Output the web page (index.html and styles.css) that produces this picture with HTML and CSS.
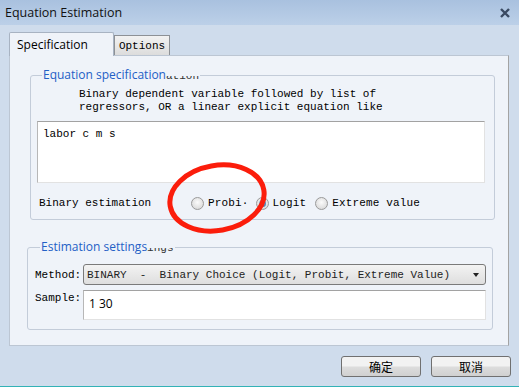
FILE: index.html
```html
<!DOCTYPE html>
<html lang="en">
<head>
  <meta charset="UTF-8">
  <title>Equation Estimation</title>
  <link rel="stylesheet" href="styles.css">
</head>
<body>

<div class="window">
  <div class="titlebar">
    <span class="title">Equation Estimation</span>
    <svg class="close" width="12" height="10" viewBox="0 0 12 10">
      <path d="M2 1 L10 9 M10 1 L2 9" stroke="#3a4a62" stroke-width="2.4" fill="none"/>
    </svg>
  </div>

  <div class="content">
    <div class="tabs">
      <div class="tab active">Specification</div>
      <div class="tab">Options</div>
    </div>

    <div class="panel">
      <fieldset class="group group-spec">
        <legend>Equation specification<span class="ghost">ation</span></legend>
        <div class="desc">
          Binary dependent variable followed by list of<br>
          regressors, OR a linear explicit equation like
        </div>
        <div class="textbox spec-box">labor c m s</div>
        <div class="binary-row">
          <span class="binary-label">Binary estimation</span>
          <span class="radio"></span><span class="radio-text probit">Probi·</span>
          <span class="radio checked"></span><span class="radio-text">Logit</span>
          <span class="radio"></span><span class="radio-text">Extreme value</span>
        </div>
      </fieldset>

      <fieldset class="group group-settings">
        <legend>Estimation settings<span class="ghost">ings</span></legend>
        <div class="field-row">
          <span class="field-label">Method:</span>
          <div class="combo">
            <span>BINARY  -  Binary Choice (Logit, Probit, Extreme Value)</span>
            <span class="arrow"></span>
          </div>
        </div>
        <div class="field-row sample-row">
          <span class="field-label">Sample:</span>
          <div class="textbox sample-box">1 30</div>
        </div>
      </fieldset>
    </div>

    <div class="buttons">
      <div class="button">确定</div>
      <div class="button">取消</div>
    </div>
  </div>

  <svg class="mark" width="110" height="80" viewBox="0 0 110 80">
    <ellipse cx="55" cy="38" rx="47.5" ry="32.5" transform="rotate(-10 55 38)"
             fill="none" stroke="#fb1d0b" stroke-width="5"/>
  </svg>
</div>

</body>
</html>
```

FILE: styles.css
```css
body {
  margin: 0;
  font-family: "Liberation Mono", monospace;
  font-size: 11px;
  color: #000;
}

.window {
  position: relative;
  width: 519px;
  height: 386px;
  background-color: #cfdcec;
  border-bottom: 1px solid #33b2b6;
  overflow: hidden;
}

.titlebar {
  height: 25px;
  display: flex;
  align-items: center;
  justify-content: space-between;
  padding: 0 8px 0 5px;
  background: linear-gradient(#a9c1df, #bcd0e8);
  font-family: "Open Sans", sans-serif;
  font-size: 12.5px;
  color: #111;
}

.content {
  padding: 7px 9px 0 9px;
}

/* tabs */

.tabs {
  display: flex;
  align-items: flex-end;
  height: 24px;
  margin-bottom: -1px;
}

.tab {
  height: 19px;
  width: 54px;
  border: 1px solid #8d9196;
  border-bottom: none;
  background: linear-gradient(#f2f2f2, #dcdcdc);
  display: flex;
  align-items: center;
  justify-content: center;
  margin-bottom: 1px;
}

.tab.active {
  width: 96px;
  height: 23px;
  justify-content: flex-start;
  padding-left: 7px;
  margin-bottom: 0;
  border-color: #a8b3c2;
  border-radius: 2px 2px 0 0;
  background: #eff3f9;
  font-family: "Open Sans", sans-serif;
  font-size: 12px;
  position: relative;
  z-index: 1;
}

.panel {
  width: 498px;
  height: 277px;
  background-color: #eff3f9;
  border: 1px solid #bcc6d3;
  border-right-color: #a3a3a3;
  padding-top: 12px;
}

/* group boxes */

.group {
  border: 1px solid #c3ccd9;
  border-radius: 3px;
  padding: 0;
  min-width: 0;
}

.group legend {
  font-family: "Open Sans", sans-serif;
  font-size: 12px;
  line-height: 14px;
  color: #2360c6;
  padding: 0 1px;
  margin-left: 5px;
}

.ghost {
  font-family: "Liberation Mono", monospace;
  font-size: 11px;
  color: #333;
  clip-path: inset(50% 0 0 0);
}

.group-spec {
  margin: 0 13px 0 20px;
  padding: 0 9px 7px 6px;
}

.desc {
  margin: 5px 0 0 42px;
  line-height: 13px;
}

.textbox {
  background: #fff;
  border: 1px solid #e2e2e2;
  border-top-color: #a2a2a2;
  border-left-color: #b7b7b7;
}

.spec-box {
  height: 54px;
  margin-top: 7px;
  padding: 6px 5px 0 5px;
}

.binary-row {
  display: flex;
  align-items: center;
  height: 18px;
  margin-top: 11px;
  padding-left: 2px;
}

.binary-label {
  width: 152px;
}

.radio {
  width: 11px;
  height: 11px;
  border: 1px solid #9a9a9a;
  border-radius: 50%;
  background: radial-gradient(circle at 50% 40%, #fbfbfb, #d2d2d2);
  margin-right: 4px;
  position: relative;
}

.radio.checked::after {
  content: "";
  position: absolute;
  left: 2px;
  top: 2px;
  width: 7px;
  height: 7px;
  border-radius: 50%;
  background: radial-gradient(circle at 40% 35%, #9fd8f6, #1f5f9c);
}

.radio-text {
  margin-right: 9px;
  letter-spacing: 0.15px;
}

.radio-text.probit {
  margin-right: 7px;
}

.group-settings {
  margin: 20px 15px 0 17px;
  padding: 0 6px 9px 7px;
}

.field-row {
  display: flex;
  align-items: center;
  margin-top: 9px;
}

.sample-row {
  align-items: flex-start;
  margin-top: 5px;
}

.field-label {
  width: 48px;
}

.sample-row .field-label {
  padding-top: 2px;
}

.combo {
  flex: 1;
  height: 19px;
  display: flex;
  align-items: center;
  justify-content: space-between;
  padding: 0 6px 0 3px;
  border: 1px solid #7a7a7a;
  border-radius: 3px;
  background: linear-gradient(#f3f3f3, #dedede);
  white-space: pre;
  color: #222;
}

.arrow {
  width: 0;
  height: 0;
  border-left: 3px solid transparent;
  border-right: 3px solid transparent;
  border-top: 4px solid #222;
}

.sample-box {
  flex: 1;
  height: 24px;
  padding: 4px 5px 0 5px;
  font-family: "Open Sans", sans-serif;
  font-size: 12px;
}

/* dialog buttons */

.buttons {
  display: flex;
  justify-content: flex-end;
  gap: 10px;
  margin-top: 10px;
  margin-right: -1px;
}

.button {
  width: 78px;
  height: 19px;
  border: 1px solid #707070;
  border-radius: 3px;
  background: linear-gradient(#f2f2f2 45%, #dcdcdc 55%, #d0d0d0);
  display: flex;
  align-items: center;
  justify-content: center;
  font-family: "Noto Sans CJK SC", sans-serif;
  font-size: 12px;
}

.mark {
  position: absolute;
  left: 162px;
  top: 160px;
}
```
